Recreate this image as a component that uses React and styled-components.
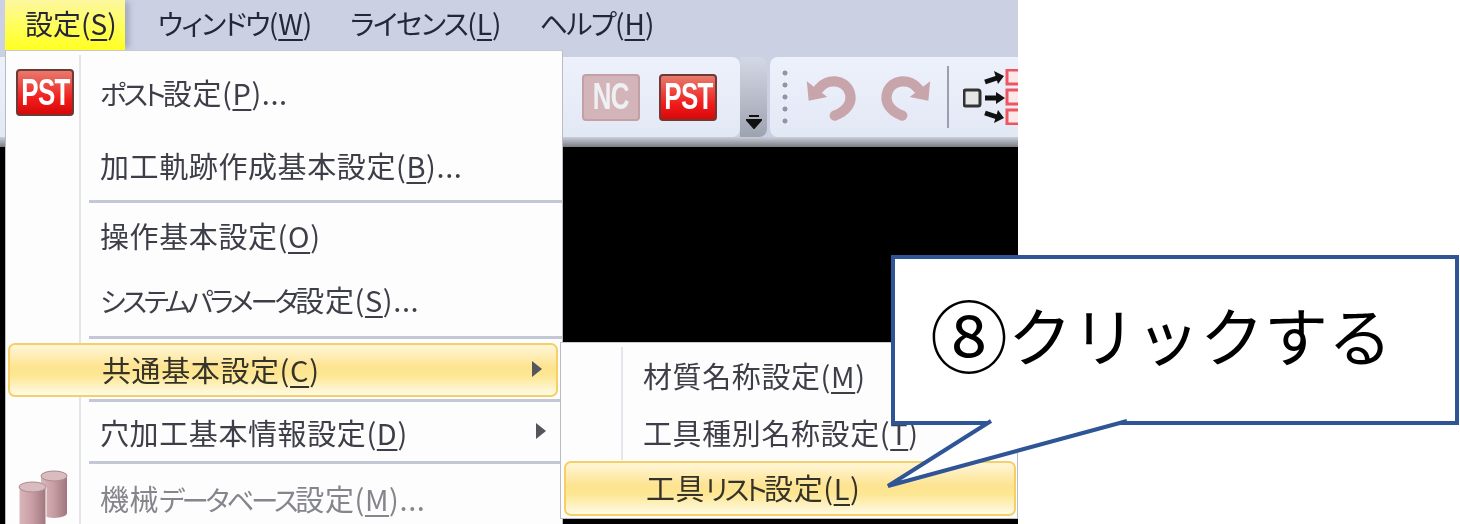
import React from 'react';
import styled, { createGlobalStyle } from 'styled-components';

const Global = createGlobalStyle`
    html, body { margin: 0; padding: 0; background: #fff; }
    body { font-family: "Noto Sans CJK JP", "Liberation Sans", sans-serif; }
`;

const Page = styled.div`
    position: relative;
    width: 1460px;
    height: 524px;
    overflow: hidden;
    background: #fff;
`;

const AppWindow = styled.div`
    position: relative;
    width: 1018px;
    height: 524px;
    display: flex;
    flex-direction: column;
    overflow: hidden;
    background: #000;
    filter: blur(0.7px);
`;

const MenuBar = styled.div`
    height: 50px;
    flex: none;
    display: flex;
    align-items: center;
    padding-left: 5px;
    background: #cbd1e3;
`;

// 메뉴 글자 폭을 맞추려고 가나만 따로 좁힌다
const Kana = styled.span``;

const MenuTitle = styled.div`
    height: 50px;
    box-sizing: border-box;
    display: flex;
    align-items: center;
    padding: 0 ${props => props.$active ? '8px' : '0'} 4px ${props => props.$active ? '20px' : '0'};
    margin-left: ${props => props.$ml || 0}px;
    font-size: 28px;
    font-feature-settings: "palt";
    color: #26263a;
    background: ${props => props.$active ? 'linear-gradient(#fdf7a0, #ffff50 60%, #ffff20)' : 'none'};
    box-shadow: ${props => props.$active ? '6px 0 6px -2px #a2a8bd' : 'none'};
    u { text-underline-offset: 4px; text-decoration-thickness: 2px; }
    ${Kana} { letter-spacing: -1.6px; }
`;

const ToolArea = styled.div`
    height: 97px;
    flex: none;
    box-sizing: border-box;
    padding-top: 7px;
    background: #cbd1e3;
    display: flex;
    flex-direction: column;
`;

const ToolRow = styled.div`
    height: 80px;
    display: flex;
`;

const ToolGroup = styled.div`
    display: flex;
    align-items: center;
    background: linear-gradient(#edf1fb, #e3e8f5);
    border-radius: ${props => props.$left ? '8px' : '0'} ${props => props.$left ? '0' : '8px'} ${props => props.$left ? '0' : '8px'} ${props => props.$left ? '8px' : '0'};
    width: ${props => props.$w}px;
    padding-left: ${props => props.$pad}px;
    box-sizing: border-box;
    flex: none;
`;

const Overflow = styled.div`
    width: 27px;
    flex: none;
    margin-right: 3px;
    background: linear-gradient(#d4d8e4, #9ea3b0);
    border-radius: 0 8px 8px 0;
    display: flex;
    align-items: flex-end;
    justify-content: center;
    padding-bottom: 8px;
    box-sizing: border-box;
`;

const Strip = styled.div`
    flex: 1;
    background: linear-gradient(#c9cedb, #7c7e84);
`;

const Viewport = styled.div`
    flex: 1;
    background: #000;
`;

const Badge = styled.div`
    flex: none;
    width: ${props => props.$w || 58}px;
    height: ${props => props.$h || 47}px;
    box-sizing: border-box;
    display: flex;
    align-items: center;
    justify-content: center;
    overflow: hidden;
    border-radius: 4px;
    border: 2px solid ${props => props.$muted ? '#c2a0a5' : '#6d3a36'};
    background: ${props => props.$muted ? '#d3b5b9' : 'linear-gradient(#e87a6c, #f01c1c 65%, #d80808)'};
    color: ${props => props.$muted ? '#eef0f4' : '#fff'};
    font-family: "Liberation Sans", sans-serif;
    font-weight: 700;
    font-size: 37px;
    margin-left: ${props => props.$gap || 0}px;
    span { display: block; transform: scaleX(0.7); letter-spacing: -1px; }
`;

const Grip = styled.div`
    width: 6px;
    height: 60px;
    margin: 0 16px 0 12px;
    flex: none;
    background: radial-gradient(circle, #8f96a8 2.2px, transparent 2.8px) 0 0 / 6px 12px repeat-y;
`;

const ToolDivider = styled.div`
    width: 2px;
    height: 62px;
    flex: none;
    margin: 0 14px 0 14px;
    background: #9aa0ae;
`;

const Menu = styled.div`
    position: absolute;
    box-sizing: border-box;
    left: ${props => props.$x}px;
    top: ${props => props.$y}px;
    width: ${props => props.$w}px;
    height: ${props => props.$h}px;
    padding-top: ${props => props.$pt}px;
    background: #fdfdfe;
    border: 1px solid #b9bcc4;
    border-top-color: #c8cad0;
    display: flex;
    flex-direction: column;
`;

const Gutter = styled.div`
    position: absolute;
    left: ${props => props.$x}px;
    top: 4px;
    bottom: ${props => props.$b || 0}px;
    width: 2px;
    background: #e4e6ec;
`;

const Item = styled.div`
    position: relative;
    flex: none;
    height: ${props => props.$h}px;
    box-sizing: border-box;
    display: flex;
    align-items: center;
    padding-left: ${props => props.$pl}px;
    font-size: 29px;
    font-feature-settings: "palt";
    letter-spacing: 0.6px;
    color: ${props => props.$dim ? '#85858c' : '#3e3e48'};
    u { text-underline-offset: 4px; text-decoration-thickness: 2px; }
    ${Kana} { font-size: 27.5px; letter-spacing: -3.2px; }
`;

const Hot = styled(Item)`
    color: #35322a;
    margin: ${props => props.$m};
    padding-left: ${props => props.$pl - 2}px;
    padding-bottom: 3px;
    border: 2px solid #f6cf66;
    border-radius: 7px;
    background: linear-gradient(#fff6d8, #fde38f 45%, #fde794 62%, #fffbe6);
`;

const Sep = styled.div`
    flex: none;
    height: 3px;
    margin: ${props => props.$mt || 0}px 0 0 83px;
    background: #c4c8d6;
`;

const IconSlot = styled.div`
    position: absolute;
    left: ${props => props.$x}px;
    top: ${props => props.$y}px;
`;

const Arrow = styled.div`
    position: absolute;
    right: ${props => props.$r}px;
    top: 50%;
    margin-top: -9px;
    border-left: 10px solid #55555c;
    border-top: 8px solid transparent;
    border-bottom: 8px solid transparent;
`;

const Callout = styled.div`
    position: absolute;
    left: 891px;
    top: 255px;
    width: 568px;
    height: 170px;
    box-sizing: border-box;
    border: 4px solid #2f5597;
    background: #fff;
    display: flex;
    align-items: center;
    padding: 0 0 14px 35px;
    font-size: 64px;
    color: #000;
    white-space: nowrap;
`;

const Circled = styled.span`
    font-size: 78px;
    line-height: 90px;
`;

const Tail = styled.svg`
    position: absolute;
    left: -8px;
    top: 162px;
    overflow: visible;
`;

const Undo = ({ flip }) => (
    <svg width="54" height="50" viewBox="0 0 58 52" style={{ flex: 'none', marginLeft: flip ? 21 : 0, transform: flip ? 'scaleX(-1)' : undefined }}>
        <path d="M16 17 C24 6 44 6 49 21 C53 33 44 42 33 46" fill="none" stroke="#c8a5aa" strokeWidth="11" strokeLinecap="round" />
        <path d="M3 9 L5 30 L25 26 Z" fill="#c8a5aa" />
    </svg>
);

const Flow = () => (
    <svg width="56" height="56" viewBox="0 0 56 56" style={{ flex: 'none' }}>
        <rect x="1" y="21" width="16" height="16" rx="2" fill="#e6e6e6" stroke="#333" strokeWidth="3" />
        <path d="M22 13 L34 9 M22 29 L36 29 M22 44 L34 48" stroke="#111" strokeWidth="5" />
        <path d="M31 2 L41 7 L35 15 Z M33 23 L42 29 L33 35 Z M35 41 L41 49 L31 54 Z" fill="#111" />
        <rect x="44" y="1" width="14" height="14" fill="#fbe9ea" stroke="#ef5560" strokeWidth="3" />
        <rect x="44" y="21" width="14" height="14" fill="#fbe9ea" stroke="#ef5560" strokeWidth="3" />
        <rect x="44" y="41" width="14" height="14" fill="#fbe9ea" stroke="#ef5560" strokeWidth="3" />
    </svg>
);

const Cylinders = () => (
    <svg width="52" height="60" viewBox="0 0 52 60">
        <defs>
            <linearGradient id="cyl" x1="0" x2="1" y1="0" y2="0">
                <stop offset="0" stopColor="#d9b6ba" />
                <stop offset="0.5" stopColor="#c79da3" />
                <stop offset="1" stopColor="#a0767e" />
            </linearGradient>
        </defs>
        <path d="M23 7 a13 5 0 0 1 26 0 V44 a13 5 0 0 1 -26 0 Z" fill="url(#cyl)" />
        <ellipse cx="36" cy="7" rx="13" ry="5" fill="#d8bcc0" stroke="#b08a90" />
        <path d="M1 18 a13 5 0 0 1 27 0 V60 H1 Z" fill="url(#cyl)" stroke="#fff" strokeWidth="1" />
        <ellipse cx="14.5" cy="18" rx="13.5" ry="5" fill="#d8bcc0" stroke="#b08a90" />
    </svg>
);

const Label = ({ text, k, tail }) => (
    <span>
        {text.split(/([ァ-ヶー]+)/).map((part, i) => (i % 2 ? <Kana key={i}>{part}</Kana> : part))}
        (<u>{k}</u>){tail}
    </span>
);

export default () => (
    <Page>
        <Global />
        <AppWindow>
            <MenuBar>
                <MenuTitle $active><Label text="設定" k="S" /></MenuTitle>
                <MenuTitle $ml={33}><Label text="ウィンドウ" k="W" /></MenuTitle>
                <MenuTitle $ml={38}><Label text="ライセンス" k="L" /></MenuTitle>
                <MenuTitle $ml={38}><Label text="ヘルプ" k="H" /></MenuTitle>
            </MenuBar>
            <ToolArea>
                <ToolRow>
                    <ToolGroup $w={740} $pad={582}>
                        <Badge $muted><span>NC</span></Badge>
                        <Badge $gap={19}><span>PST</span></Badge>
                    </ToolGroup>
                    <Overflow>
                        <svg width="16" height="14" viewBox="0 0 16 14">
                            <path d="M3 1 H13 M1 5 H15 L8 13 Z" stroke="#111" strokeWidth="2" fill="#111" />
                        </svg>
                    </Overflow>
                    <ToolGroup $left $w={248} $pad={0}>
                        <Grip />
                        <Undo />
                        <Undo flip />
                        <ToolDivider />
                        <Flow />
                    </ToolGroup>
                </ToolRow>
                <Strip />
            </ToolArea>
            <Viewport />

            <Menu $x={5} $y={50} $w={558} $h={480} $pt={3}>
                <Gutter $x={73} />
                <IconSlot $x={10} $y={18}>
                    <Badge $w={58} $h={47}><span>PST</span></Badge>
                </IconSlot>
                <Item $h={75} $pl={94}><Label text="ポスト設定" k="P" tail="..." /></Item>
                <Item $h={71} $pl={94}><Label text="加工軌跡作成基本設定" k="B" tail="..." /></Item>
                <Sep />
                <Item $h={64} $pl={94}><Label text="操作基本設定" k="O" /></Item>
                <Item $h={64} $pl={94}><Label text="システムパラメータ設定" k="S" tail="..." /></Item>
                <Sep $mt={5} />
                <Hot $h={54} $pl={94} $m="4px 4px 2px 2px"><Label text="共通基本設定" k="C" /><Arrow $r={14} /></Hot>
                <Sep />
                <Item $h={59} $pl={94}><Label text="穴加工基本情報設定" k="D" /><Arrow $r={16} /></Item>
                <Sep />
                <Item $h={68} $pl={94} $dim><Label text="機械データベース設定" k="M" tail="..." /></Item>
                <IconSlot $x={12} $y={418}>
                    <Cylinders />
                </IconSlot>
            </Menu>

            <Menu $x={560} $y={342} $w={458} $h={177} $pt={3}>
                <Gutter $x={60} $b={58} />
                <Item $h={58} $pl={82}><Label text="材質名称設定" k="M" /></Item>
                <Item $h={56} $pl={82}><Label text="工具種別名称設定" k="T" /></Item>
                <Hot $h={55} $pl={82} $m="1px 1px 0 3px"><Label text="工具リスト設定" k="L" /></Hot>
            </Menu>
        </AppWindow>

        <Callout>
            <Circled>⑧</Circled>クリックする
            <Tail width="260" height="80" viewBox="0 0 260 80">
                <path d="M104 0 L1 65 L240 0" fill="#fff" stroke="#2f5597" strokeWidth="4" />
            </Tail>
        </Callout>
    </Page>
);
